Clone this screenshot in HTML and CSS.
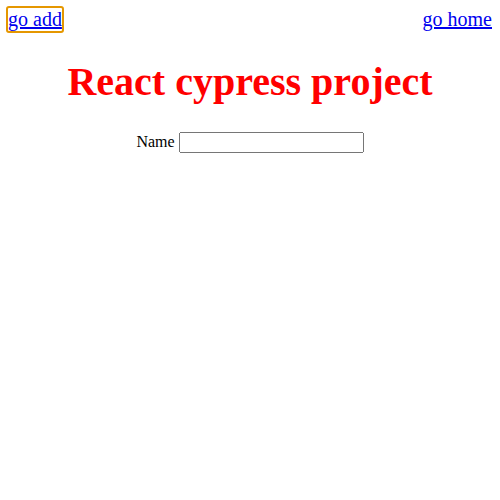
FILE: index.html
```html
<!DOCTYPE html>
<html>
<head>
<meta charset="utf-8">
<link rel="stylesheet" href="styles.css">
</head>
<body>
<nav class="nav">
  <a class="nav-link focused" href="#">go add</a>
  <a class="nav-link plain" href="#">go home</a>
</nav>
<h1 class="title">React cypress project</h1>
<form class="form">
  <label class="label">Name <input class="input" type="text"></label>
</form>
</body>
</html>
```
FILE: styles.css
```css
body {
  margin: 6px;
  font-family: "Liberation Serif", serif;
}
.nav {
  display: flex;
  justify-content: space-between;
  align-items: flex-start;
  font-size: 20px;
}
.nav-link {
  color: #0000ee;
  display: block;
  line-height: 23px;
}
.focused {
  border: 2px solid #e59700;
  border-radius: 3px;
}
.plain {
  padding: 2px 2px 0 0;
}
.title {
  color: red;
  text-align: center;
  font-size: 40px;
  margin: 25px 0 27px;
}
.form {
  text-align: center;
  font-size: 16px;
}
.input {
  width: 177px;
  height: 15px;
  font-family: "Liberation Sans", sans-serif;
}
```
